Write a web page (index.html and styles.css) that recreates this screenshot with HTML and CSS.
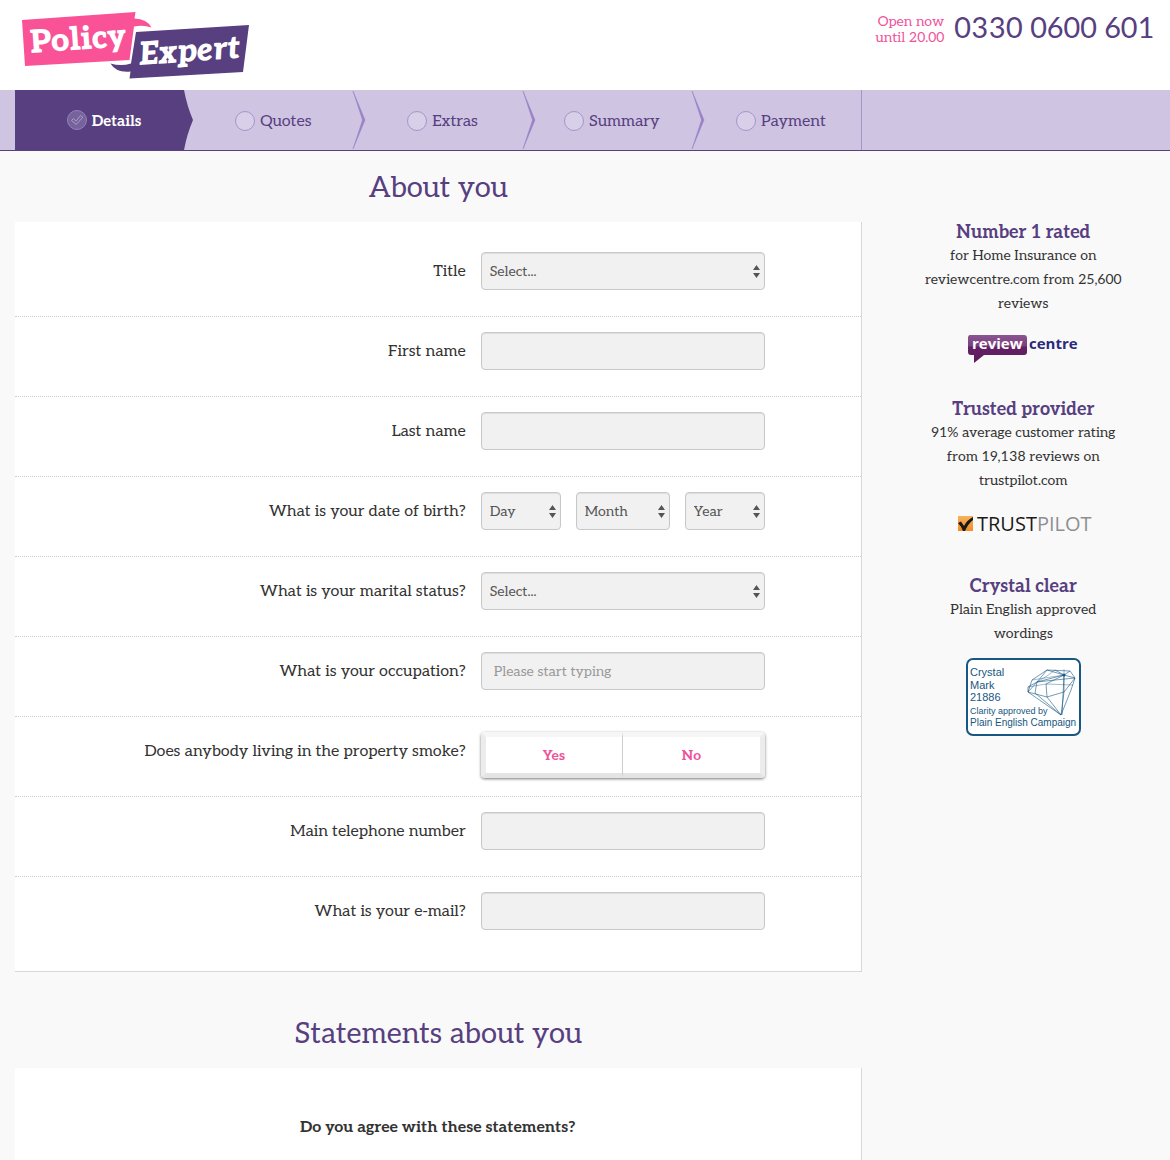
FILE: index.html
```html
<!DOCTYPE html>
<html lang="en">
<head>
<meta charset="utf-8">
<meta name="viewport" content="width=device-width, initial-scale=1">
<title>Policy Expert - Details</title>
<link rel="stylesheet" href="styles.css">
</head>
<body>
<header class="header">
  <a class="logo" href="#" aria-label="Policy Expert">
    <svg width="229" height="68" viewBox="21 11 229 68">
      <path fill="#f95297" d="M22 20 135.500 12 134.500 18.500Q147 19 151.500 27.500Q143 24.500 134 26.500L129.500 60 25 66Z"/>
      <path fill="#573f80" d="M136 32 249 25 243 72 129.500 78.500 130.500 71.500Q116 73 110.500 63.500Q121 66.500 131 63.500Z"/>
      <text class="logo-text" x="31" y="53" transform="rotate(-4 31 53)">Policy</text>
      <text class="logo-text logo-text-italic" x="140" y="65" transform="rotate(-4 140 65)">Expert</text>
    </svg>
  </a>
  <div class="contact">
    <p class="hours">Open now<br>until 20.00</p>
    <a class="phone" href="tel:03300600601">0330 0600 601</a>
  </div>
</header>

<nav class="progress" aria-label="Progress">
  <ol class="steps">
    <li class="step step-current">
      <a href="#"><svg class="tick" width="20" height="20" viewBox="0 0 20 20"><circle cx="10" cy="10" r="9.500" fill="#77639c" stroke="#9482bb"/><path d="M4.500 10.500 6.500 8.500 9 11.200 13.500 5.500 15.800 7.200 9.300 14.500Z" fill="none" stroke="#ab9ccb"/></svg>Details</a>
      <svg class="arrow" width="10" height="60" viewBox="0 0 10 60"><path d="M0 0Q3 16 9 30Q3 44 0 60Z" fill="#573f80"/></svg>
    </li>
    <li class="step"><a href="#"><span class="dot"></span>Quotes</a>
      <svg class="arrow" width="13" height="60" viewBox="0 0 13 60"><path d="M0 1 12 30 0 59 9.500 30Z" fill="#9882c4" stroke="#9882c4" stroke-width=".5"/></svg></li>
    <li class="step"><a href="#"><span class="dot"></span>Extras</a>
      <svg class="arrow" width="13" height="60" viewBox="0 0 13 60"><path d="M0 1 12 30 0 59 9.500 30Z" fill="#9882c4" stroke="#9882c4" stroke-width=".5"/></svg></li>
    <li class="step"><a href="#"><span class="dot"></span>Summary</a>
      <svg class="arrow" width="13" height="60" viewBox="0 0 13 60"><path d="M0 1 12 30 0 59 9.500 30Z" fill="#9882c4" stroke="#9882c4" stroke-width=".5"/></svg></li>
    <li class="step"><a href="#"><span class="dot"></span>Payment</a></li>
  </ol>
</nav>

<div class="layout">
  <main>
    <form>
      <h2 class="section-title">About you</h2>
      <div class="card fields">
        <div class="row">
          <label for="title">Title</label>
          <select id="title" class="control"><option>Select...</option></select>
        </div>
        <div class="row">
          <label for="first">First name</label>
          <input id="first" class="control" type="text">
        </div>
        <div class="row">
          <label for="last">Last name</label>
          <input id="last" class="control" type="text">
        </div>
        <div class="row">
          <label for="day">What is your date of birth?</label>
          <div class="date">
            <select id="day" class="control"><option>Day</option></select>
            <select class="control" aria-label="Month"><option>Month</option></select>
            <select class="control" aria-label="Year"><option>Year</option></select>
          </div>
        </div>
        <div class="row">
          <label for="marital">What is your marital status?</label>
          <select id="marital" class="control"><option>Select...</option></select>
        </div>
        <div class="row">
          <label for="job">What is your occupation?</label>
          <input id="job" class="control" type="text" placeholder="Please start typing">
        </div>
        <div class="row">
          <span class="label" id="smoke">Does anybody living in the property smoke?</span>
          <div class="toggle" role="group" aria-labelledby="smoke">
            <button type="button">Yes</button><button type="button">No</button>
          </div>
        </div>
        <div class="row">
          <label for="phone">Main telephone number</label>
          <input id="phone" class="control" type="tel">
        </div>
        <div class="row">
          <label for="email">What is your e-mail?</label>
          <input id="email" class="control" type="email">
        </div>
      </div>
      <h2 class="section-title section-title-next">Statements about you</h2>
      <div class="card statements">
        <p>Do you agree with these statements?</p>
      </div>
    </form>
  </main>

  <aside class="sidebar">
    <section class="promo">
      <h3>Number 1 rated</h3>
      <p>for Home Insurance on<br>reviewcentre.com from 25,600<br>reviews</p>
      <svg class="badge" width="112" height="32" viewBox="0 0 112 32">
        <defs><linearGradient id="plum" x1="0" y1="0" x2="0" y2="1"><stop offset="0" stop-color="#8c5490"/><stop offset=".4" stop-color="#79407d"/><stop offset=".42" stop-color="#642065"/><stop offset="1" stop-color="#5c1a5c"/></linearGradient></defs>
        <path fill="url(#plum)" d="M3 1H57Q60 1 60 4V18Q60 21 57 21H17L7 29V21H4Q1 21 1 18V4Q1 1 3 1Z"/>
        <text class="review-text" x="5" y="15" fill="#fff">review</text>
        <text class="review-text" x="62" y="15" fill="#2b2a7c">centre</text>
      </svg>
    </section>
    <section class="promo">
      <h3>Trusted provider</h3>
      <p>91% average customer rating<br>from 19,138 reviews on<br>trustpilot.com</p>
      <svg class="badge" width="132" height="32" viewBox="0 0 132 32">
        <defs><linearGradient id="amber" x1="0" y1="0" x2="0" y2="1"><stop offset="0" stop-color="#f6b25d"/><stop offset="1" stop-color="#f28d22"/></linearGradient></defs>
        <path fill="url(#amber)" d="M1 5H16V20H1Z"/>
        <path fill="#1c1a19" d="M1 12 4 10.500 7 15Q10 9 16 6V9Q11 13 8 20H6Q4 15 1 12Z"/>
        <text class="pilot-text" x="20" y="20" fill="#1c1a19">TRUST<tspan fill="#8f8f92">PILOT</tspan></text>
      </svg>
    </section>
    <section class="promo">
      <h3>Crystal clear</h3>
      <p>Plain English approved<br>wordings</p>
      <svg class="crystal" width="114" height="78" viewBox="0 0 114 78">
        <rect x="1" y="1" width="113" height="76" rx="6" fill="#fff" stroke="#175781" stroke-width="2"/>
        <g class="crystal-text" fill="#175781">
          <text x="4" y="18">Crystal</text><text x="4" y="31">Mark</text><text x="4" y="43">21886</text>
          <text class="crystal-small" x="4" y="56">Clarity approved by</text>
          <text class="crystal-mid" x="4" y="68">Plain English Campaign</text>
        </g>
        <g fill="none" stroke="#175781" stroke-width=".6">
          <path d="M62 34 66 22 81 12 104 13 109 20 105 32 95 57 62 34ZM62 34 71 24 89 22 109 20M62 34 81 39 98 34 109 20M62 34V29L71 24 98 17 104 13M81 12 71 24 69 35 95 57 81 39 80 26 98 17 81 12M89 12 98 17 96 57M98 17 98 34 95 57M98 17 109 20"/>
          <path d="M66 22 98 17M62 29 80 26 107 27M89 12 81 18 71 24M98 17V11" stroke-width=".4"/>
        </g>
        <circle cx="98" cy="17" r="1.500" fill="#175781"/>
      </svg>
    </section>
  </aside>
</div>
</body>
</html>
```
FILE: styles.css
```css
* { box-sizing: border-box; }

body {
  margin: 0;
  background: #f9f9f9;
  color: #333;
  font-family: Aleo, "DejaVu Serif Condensed", "DejaVu Serif", serif;
  font-size: 14px;
  line-height: 24px;
}

h2, h3, p, ol { margin: 0; padding: 0; }
a { color: inherit; text-decoration: none; }
svg { display: block; overflow: visible; }

.header {
  display: flex;
  justify-content: space-between;
  align-items: flex-start;
  height: 90px;
  padding: 11px 15px 0 21px;
  background: #fff;
}
.logo-text { fill: #fff; font-size: 32px; font-weight: 900; }
.logo-text-italic { font-style: italic; }

.contact { display: flex; gap: 10px; }
.hours { padding-top: 3px; color: #f0529b; font-size: 14px; line-height: 16px; text-align: right; }
.phone { color: #573f80; font-size: 29px; line-height: 38px; }

.progress { padding: 0 15px; background: #cfc4e2; border-bottom: 1px solid #573f80; }
.steps {
  display: flex;
  width: calc(75% - 8px);
  height: 60px;
  border-right: 1px solid #a695cc;
  list-style: none;
}
.step { position: relative; flex: 1; color: #573f80; font-size: 16px; }
.step a { display: flex; align-items: center; justify-content: center; gap: 5px; height: 60px; padding: 4px 0 0 9px; }
.step-current { background: #573f80; color: #fff; font-size: 15px; font-weight: 700; }
.step-current a { padding-top: 2px; }
.arrow { position: absolute; left: 100%; top: 0; z-index: 1; }
.dot, .tick { margin-bottom: 2px; }
.dot { width: 20px; height: 20px; border: 1px solid #a695cc; border-radius: 50%; background: #d8cfe8; }

.layout { display: grid; grid-template-columns: 3fr 1fr; }
main { padding: 0 16px 0 15px; }

.section-title { padding: 18px 0 13px; color: #573f80; font-size: 29px; font-weight: 400; line-height: 40px; text-align: center; }
.section-title-next { margin-top: 25px; }

.card { background: #fff; border-right: 1px solid #d8d8d8; }
.fields { padding: 15px 0 14px; border-bottom: 1px solid #d8d8d8; }
.row {
  display: grid;
  grid-template-columns: 451fr 284fr 81fr;
  column-gap: 15px;
  height: 80px;
  padding-top: 15px;
  border-bottom: 1px dotted #ccc;
}
.row:last-child { border-bottom: 0; }
.row label, .label { font-size: 16px; line-height: 40px; text-align: right; }

.control {
  width: 100%;
  min-width: 0;
  height: 38px;
  padding: 0 12px;
  border: 1px solid #c8c8c8;
  border-radius: 4px;
  background-color: #f1f1f1;
  box-shadow: inset 0 1px 1px #dedede;
  color: #555;
  font: inherit;
}
.control::placeholder { color: #999; opacity: 1; }
select.control {
  appearance: none;
  padding: 2px 8px 0;
  background-image: url("data:image/svg+xml,%3Csvg xmlns='http://www.w3.org/2000/svg' width='7' height='13'%3E%3Cpath d='M3.500 0 7 5H0ZM3.500 13 7 8H0Z' fill='%23555'/%3E%3C/svg%3E");
  background-repeat: no-repeat;
  background-position: right 4px center;
}
.date { display: grid; grid-template-columns: 80fr 94fr 80fr; gap: 15px; }

.toggle {
  display: flex;
  height: 46px;
  border-radius: 4px;
  background: #fff;
  box-shadow: 0 1px 3px #777;
}
.toggle button {
  flex: 1;
  padding: 2px 0 0;
  border: 5px solid;
  border-color: #f6f6f6 #ececec #e4e4e4;
  border-right-width: 0;
  border-radius: 4px 0 0 4px;
  background: #fff;
  color: #f0529b;
  font: inherit;
  font-weight: 700;
}
.toggle button + button { border-right-width: 5px; border-left: 1px solid #ccc; border-radius: 0 4px 4px 0; }

.statements { padding: 48px 0 20px; font-size: 16px; font-weight: 700; text-align: center; }

.sidebar { padding: 69px 16px 0 15px; text-align: center; }
.promo { display: flex; flex-direction: column; align-items: center; padding-bottom: 30px; }
.promo h3 { padding-top: 2px; color: #573f80; font-size: 18px; line-height: 22px; }
.badge { margin-top: 18px; margin-bottom: 1px; }
.crystal { margin-top: 12px; }
.review-text { font-family: "Open Sans", sans-serif; font-size: 15px; font-weight: 700; }
.pilot-text { font-family: "Open Sans", sans-serif; font-size: 20px; }
.crystal-text { font-family: "Liberation Sans", Arial, sans-serif; font-size: 11px; }
.crystal-small { font-size: 9px; }
.crystal-mid { font-size: 10px; }
```
